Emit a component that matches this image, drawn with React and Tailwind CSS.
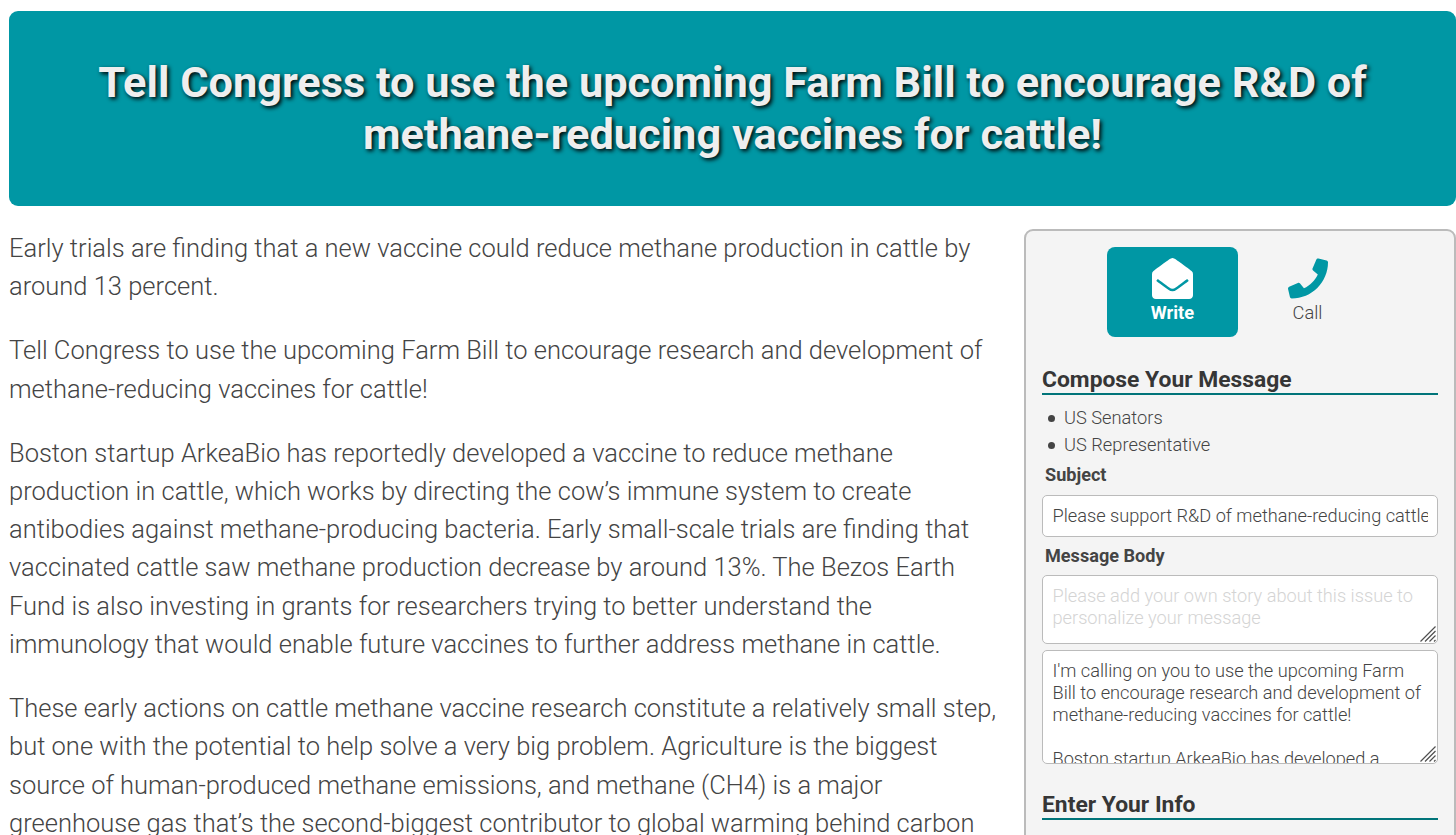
import React, { useState } from "react";
import { FaEnvelopeOpen, FaPhone } from "react-icons/fa";

const paragraphs = [
  [
    "Early trials are finding that a new vaccine could reduce methane production in cattle by",
    "around 13 percent.",
  ],
  [
    "Tell Congress to use the upcoming Farm Bill to encourage research and development of",
    "methane-reducing vaccines for cattle!",
  ],
  [
    "Boston startup ArkeaBio has reportedly developed a vaccine to reduce methane",
    "production in cattle, which works by directing the cow’s immune system to create",
    "antibodies against methane-producing bacteria. Early small-scale trials are finding that",
    "vaccinated cattle saw methane production decrease by around 13%. The Bezos Earth",
    "Fund is also investing in grants for researchers trying to better understand the",
    "immunology that would enable future vaccines to further address methane in cattle.",
  ],
  [
    "These early actions on cattle methane vaccine research constitute a relatively small step,",
    "but one with the potential to help solve a very big problem. Agriculture is the biggest",
    "source of human-produced methane emissions, and methane (CH4) is a major",
    "greenhouse gas that’s the second-biggest contributor to global warming behind carbon",
  ],
];

const targets = ["US Senators", "US Representative"];

const defaultMessage = `I'm calling on you to use the upcoming Farm
Bill to encourage research and development of
methane-reducing vaccines for cattle!

Boston startup ArkeaBio has developed a`;

function SectionTitle({ children }) {
  return (
    <h2 className="h-[29px] border-b-2 border-[#007479] text-[22.85px] font-bold leading-[28px] text-[#363636]">
      {children}
    </h2>
  );
}

function Field({ height, ...props }) {
  return (
    <div className="relative">
      <textarea
        {...props}
        className={`block w-full resize-none overflow-hidden rounded-[5px] border border-[#bbb] bg-white pl-[9.5px] pr-[9px] pt-[9.5px] text-[18.22px] font-light leading-[21.9px] text-[#444] outline-none placeholder:text-[#d4d4d4] ${height}`}
      />
      {/* resize grip */}
      <svg
        className="pointer-events-none absolute bottom-[2px] right-[2px] h-4 w-4"
        viewBox="0 0 16 16"
        fill="none"
        stroke="#505050"
        strokeWidth="1.2"
      >
        <path d="M0.5 15.5L15.5 0.5M5 15.5L15.5 5M9.5 15.5L15.5 9.5M14 15.5L15.5 14" />
      </svg>
    </div>
  );
}

export default function App() {
  const [mode, setMode] = useState("write");
  const [subject, setSubject] = useState("Please support R&D of methane-reducing cattle vaccines");
  const [story, setStory] = useState("");
  const [message, setMessage] = useState(defaultMessage);

  const tab = (name) =>
    `flex h-[90px] w-[131px] flex-col items-center rounded-lg pt-[11px] text-[18.25px] leading-[27px] ${
      mode === name ? "bg-[#0097a4] font-bold text-white" : "font-light text-[#444]"
    }`;

  return (
    <div className="h-[835px] overflow-hidden bg-white pl-[9px] pt-[11px] font-['Roboto',sans-serif] text-[#444]">
      <header className="flex h-[195px] items-center justify-center rounded-[9px] bg-[#0097a4]">
        <h1 className="text-center text-[43.3px] font-bold leading-[52px] text-[#eee] [text-shadow:2px_2px_4px_#000]">
          Tell Congress to use the upcoming Farm Bill to encourage R&amp;D of
          <br />
          methane-reducing vaccines for cattle!
        </h1>
      </header>

      <div className="mt-[23px] flex">
        <article className="w-[1015px] shrink-0">
          {paragraphs.map((lines, i) => (
            <p key={i} className="mb-[25.6px] whitespace-nowrap text-[25.5px] font-light leading-[38.33px]">
              {lines.map((line, j) => (
                <span key={j} className="block">{line}</span>
              ))}
            </p>
          ))}
        </article>

        <form className="h-[700px] flex-1 rounded-[9px] border-2 border-[#bbb] bg-[#f4f4f4] px-4 pt-4">
          <div className="flex justify-center gap-[4px]">
            <button type="button" className={tab("write")} onClick={() => setMode("write")}>
              <FaEnvelopeOpen className={mode === "write" ? "h-[41px] w-[41px] text-white" : "h-[41px] w-[41px] text-[#0097a4]"} />
              Write
            </button>
            <button type="button" className={tab("call")} onClick={() => setMode("call")}>
              <FaPhone className={mode === "call" ? "ml-px h-[41px] w-[40px] text-white" : "ml-px h-[41px] w-[40px] text-[#0097a4]"} />
              Call
            </button>
          </div>

          <div className="mt-[29px]">
            <SectionTitle>Compose Your Message</SectionTitle>
          </div>
          <ul className="mt-[9px] pl-[6px] text-[18.25px] font-light leading-[27.4px]">
            {targets.map((name) => (
              <li key={name} className="flex items-center gap-[9px]">
                <span className="mt-px h-[7px] w-[7px] rounded-full bg-[#444]" />
                {name}
              </li>
            ))}
          </ul>

          <label className="mt-[2px] block pl-[3px] text-[18.1px] font-bold leading-[27px]">Subject</label>
          <input
            value={subject}
            onChange={(e) => setSubject(e.target.value)}
            className="mt-[7px] block h-[42px] w-full rounded-[5px] border border-[#bbb] bg-white pl-[9.5px] pr-[9px] text-[18.22px] font-light text-[#444] outline-none"
          />

          <label className="mt-[5px] block pl-[3px] text-[18.1px] font-bold leading-[27px]">Message Body</label>
          <div className="mt-[6px] flex flex-col gap-[6px]">
            <Field
              height="h-[69px]"
              value={story}
              onChange={(e) => setStory(e.target.value)}
              placeholder="Please add your own story about this issue to personalize your message"
            />
            <Field height="h-[114px]" value={message} onChange={(e) => setMessage(e.target.value)} />
          </div>

          <div className="mt-[27px]">
            <SectionTitle>Enter Your Info</SectionTitle>
          </div>
        </form>
      </div>
    </div>
  );
}
